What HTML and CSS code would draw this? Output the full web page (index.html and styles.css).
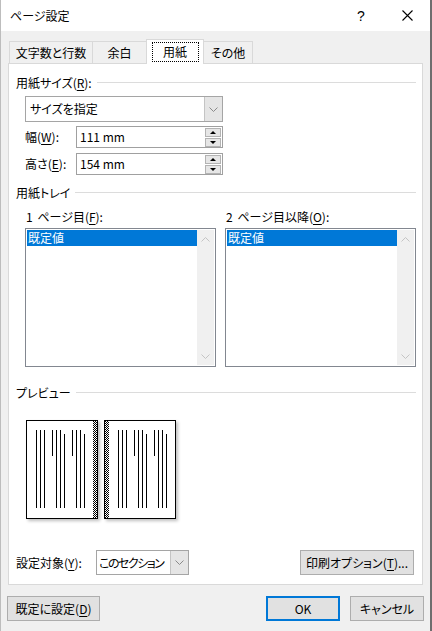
FILE: index.html
```html
<!DOCTYPE html>
<html lang="ja">
<head>
<meta charset="utf-8">
<title>ページ設定</title>
<link rel="stylesheet" href="styles.css">
</head>
<body>
<div class="window">
  <div class="titlebar">
    <span class="title">ページ設定</span>
    <span class="help">?</span>
    <span class="close"><svg width="11" height="11" viewBox="0 0 11 11"><path d="M0.5 0.5 L10.5 10.5 M10.5 0.5 L0.5 10.5" stroke="#000" stroke-width="1.1" fill="none"/></svg></span>
  </div>

  <div class="tabs">
    <div class="tab t1">文字数と行数</div>
    <div class="tab t2">余白</div>
    <div class="tab t3 active"><span class="focus">用紙</span></div>
    <div class="tab t4">その他</div>
  </div>

  <div class="panel">
    <div class="group-head g1"><span>用紙サイズ(<u>R</u>):</span><i class="rule"></i></div>

    <div class="combo size-combo">
      <span class="combo-text">サイズを指定</span>
      <span class="combo-btn"><svg width="9" height="5" viewBox="0 0 9 5"><path d="M0.5 0.5 L4.5 4.5 L8.5 0.5" stroke="#8a8a8a" fill="none"/></svg></span>
    </div>

    <div class="field-row fr1">
      <span class="field-label">幅(<u>W</u>):</span>
      <div class="spin">
        <span class="spin-text">111 mm</span>
        <span class="spin-btns"><span class="sb up"></span><span class="sb down"></span></span>
      </div>
    </div>
    <div class="field-row fr2">
      <span class="field-label">高さ(<u>E</u>):</span>
      <div class="spin">
        <span class="spin-text">154 mm</span>
        <span class="spin-btns"><span class="sb up"></span><span class="sb down"></span></span>
      </div>
    </div>

    <div class="group-head g2"><span>用紙トレイ</span><i class="rule"></i></div>

    <div class="trays">
      <div class="tray">
        <div class="tray-label">1 ページ目(<u>F</u>):</div>
        <div class="listbox">
          <div class="items"><div class="item sel">既定値</div></div>
          <div class="vscroll">
            <svg width="9" height="5" viewBox="0 0 9 5"><path d="M0.5 4.5 L4.5 0.5 L8.5 4.5" stroke="#c4c4c4" fill="none"/></svg>
            <svg width="9" height="5" viewBox="0 0 9 5"><path d="M0.5 0.5 L4.5 4.5 L8.5 0.5" stroke="#c4c4c4" fill="none"/></svg>
          </div>
        </div>
      </div>
      <div class="tray">
        <div class="tray-label">2 ページ目以降(<u>O</u>):</div>
        <div class="listbox">
          <div class="items"><div class="item sel">既定値</div></div>
          <div class="vscroll">
            <svg width="9" height="5" viewBox="0 0 9 5"><path d="M0.5 4.5 L4.5 0.5 L8.5 4.5" stroke="#c4c4c4" fill="none"/></svg>
            <svg width="9" height="5" viewBox="0 0 9 5"><path d="M0.5 0.5 L4.5 4.5 L8.5 0.5" stroke="#c4c4c4" fill="none"/></svg>
          </div>
        </div>
      </div>
    </div>

    <div class="group-head g3"><span>プレビュー</span><i class="rule"></i></div>

    <div class="preview">
      <svg class="page" width="72" height="99" viewBox="0 0 72 99">
        <defs>
          <pattern id="chk" width="2" height="2" patternUnits="userSpaceOnUse">
            <rect width="2" height="2" fill="#fff"/>
            <rect width="1" height="1" fill="#000"/>
            <rect x="1" y="1" width="1" height="1" fill="#000"/>
          </pattern>
        </defs>
        <rect x="0.5" y="0.5" width="71" height="98" fill="#fff" stroke="#000"/>
        <rect x="67" y="1" width="4" height="97" fill="url(#chk)"/>
        <g stroke="#000" stroke-width="1">
          <path d="M10.5 10 V88 M14.5 10 V88 M18.5 10 V88"/>
          <path d="M26.5 10 V36 M30.5 10 V88 M34.5 10 V88 M38.5 14 V88"/>
          <path d="M46.5 10 V36 M50.5 10 V88 M54.5 10 V88 M58.5 14 V88"/>
        </g>
      </svg>
      <svg class="page" width="72" height="99" viewBox="0 0 72 99">
        <defs>
          <pattern id="chk2" width="2" height="2" patternUnits="userSpaceOnUse">
            <rect width="2" height="2" fill="#fff"/>
            <rect width="1" height="1" fill="#000"/>
            <rect x="1" y="1" width="1" height="1" fill="#000"/>
          </pattern>
        </defs>
        <rect x="0.5" y="0.5" width="71" height="98" fill="#fff" stroke="#000"/>
        <rect x="1" y="1" width="4" height="97" fill="url(#chk2)"/>
        <g stroke="#000" stroke-width="1">
          <path d="M14.5 10 V88 M18.5 10 V88 M22.5 10 V88"/>
          <path d="M30.5 10 V36 M34.5 10 V88 M38.5 10 V88 M42.5 14 V88"/>
          <path d="M50.5 10 V36 M54.5 10 V88 M58.5 10 V88 M62.5 14 V88"/>
        </g>
      </svg>
    </div>

    <div class="apply-row">
      <span class="apply-label">設定対象(<u>Y</u>):</span>
      <div class="combo apply-combo">
        <span class="combo-text">このセクション</span>
        <span class="combo-btn"><svg width="9" height="5" viewBox="0 0 9 5"><path d="M0.5 0.5 L4.5 4.5 L8.5 0.5" stroke="#8a8a8a" fill="none"/></svg></span>
      </div>
      <button class="btn print-btn">印刷オプション(<u>T</u>)...</button>
    </div>
  </div>

  <div class="footer">
    <button class="btn default-btn">既定に設定(<u>D</u>)</button>
    <button class="btn ok-btn">OK</button>
    <button class="btn cancel-btn">キャンセル</button>
  </div>
</div>
</body>
</html>
```

FILE: styles.css
```css
* { box-sizing: border-box; }
html, body { margin: 0; padding: 0; }
body {
  width: 432px;
  height: 631px;
  overflow: hidden;
  font-family: "Noto Sans CJK JP", "Noto Sans", sans-serif;
  font-size: 12px;
  line-height: 16px;
  color: #000;
  background: #f0f0f0;
  font-feature-settings: "palt";
}
u { text-decoration: underline; text-underline-offset: 2px; }

.window {
  height: 631px;
  border-left: 1px solid #bdbdbd;
  border-right: 2px solid #6e6e6e;
  background: #f0f0f0;
  display: flex;
  flex-direction: column;
}

/* title bar */
.titlebar {
  flex: none;
  height: 31px;
  background: #fff;
  display: flex;
  align-items: center;
  padding-left: 9px;
}
.title { flex: 1; }
.help { width: 46px; text-align: center; font-family: "Liberation Sans", sans-serif; font-size: 14px; }
.close { width: 46px; display: flex; justify-content: center; align-items: center; }
.close svg { display: block; }

/* tabs */
.tabs {
  flex: none;
  margin-top: 8px;
  height: 24px;
  padding-left: 8px;
  display: flex;
  align-items: flex-end;
}
.tab {
  height: 22px;
  border: 1px solid #d9d9d9;
  border-bottom: none;
  margin-left: -1px;
  display: flex;
  align-items: center;
  justify-content: center;
  background: #f0f0f0;
  white-space: nowrap;
}
.t1 { margin-left: 0; width: 84px; }
.t2 { width: 55px; }
.t3 { width: 58px; }
.t4 { width: 50px; }
.tab.active {
  height: 25px;
  margin-bottom: -1px;
  background: #fff;
  position: relative;
  z-index: 1;
  padding-bottom: 1px;
}
.focus {
  display: flex;
  align-items: center;
  justify-content: center;
  width: 47px;
  height: 20px;
  outline: 1px dotted #000;
  outline-offset: -1px;
}

/* panel */
.panel {
  flex: none;
  margin-left: 7px;
  width: 415px;
  height: 522px;
  background: #fff;
  border: 1px solid #d9d9d9;
}
.group-head {
  display: flex;
  align-items: center;
  height: 16px;
  padding-left: 7px;
  padding-right: 6px;
  white-space: nowrap;
}
.group-head .rule {
  flex: 1;
  height: 1px;
  background: #dcdcdc;
  margin-left: 5px;
  margin-top: -1px;
}
.g1 { margin-top: 11px; }
.g2 { margin-top: 10px; }
.g3 { margin-top: 18px; }

/* combo */
.combo {
  display: flex;
  border: 1px solid #a5a5a5;
  background: #fff;
}
.combo-text {
  flex: 1;
  display: flex;
  align-items: center;
  padding-left: 4px;
  white-space: nowrap;
  overflow: hidden;
}
.combo-btn {
  width: 18px;
  flex: none;
  background: #e5e5e5;
  border-left: 1px solid #c4c4c4;
  display: flex;
  align-items: center;
  justify-content: center;
}
.combo-btn svg { display: block; }
.size-combo {
  margin: 5px 0 0 16px;
  width: 198px;
  height: 26px;
}

/* spin fields */
.field-row {
  display: flex;
  align-items: center;
  margin-left: 16px;
  height: 22px;
}
.fr1 { margin-top: 4px; }
.fr2 { margin-top: 5px; }
.field-label { width: 51px; }
.spin {
  width: 147px;
  height: 22px;
  border: 1px solid #a0a0a0;
  display: flex;
  align-items: center;
}
.spin-text { flex: 1; padding-left: 3px; }
.spin-btns {
  display: flex;
  flex-direction: column;
  gap: 1px;
  margin-right: 1px;
}
.sb {
  width: 16px;
  height: 9px;
  background: #e6e6e6;
  border: 1px solid #b3b3b3;
  display: flex;
  align-items: center;
  justify-content: center;
}
.sb::after {
  content: "";
  width: 0;
  height: 0;
  border-left: 3px solid transparent;
  border-right: 3px solid transparent;
}
.sb.up::after { border-bottom: 3px solid #000; }
.sb.down::after { border-top: 3px solid #000; }

/* trays */
.trays {
  margin-top: 8px;
  padding-left: 16px;
  display: grid;
  grid-template-columns: 191px 191px;
  column-gap: 9px;
}
.tray-label { padding-left: 1px; height: 16px; white-space: nowrap; word-spacing: 2px; }
.listbox {
  margin-top: 3px;
  height: 139px;
  border: 1px solid #828790;
  padding: 1px;
  display: flex;
  background: #fff;
}
.items { flex: 1; }
.item { height: 16px; line-height: 16px; padding-left: 1px; }
.item.sel { background: #0078d7; color: #fff; }
.vscroll {
  width: 17px;
  background: #f0f0f0;
  display: flex;
  flex-direction: column;
  justify-content: space-between;
  align-items: center;
  padding: 7px 0 6px;
}
.vscroll svg { display: block; }

/* preview */
.preview {
  margin-top: 19px;
  padding-left: 17px;
  display: flex;
  gap: 6px;
}
.page {
  display: block;
  box-shadow: 2px 2px 3px rgba(0, 0, 0, 0.25);
}

/* apply row */
.apply-row {
  margin-top: 31px;
  display: flex;
  align-items: center;
  padding-left: 7px;
  padding-right: 8px;
}
.apply-label { width: 80px; white-space: nowrap; }
.apply-combo { width: 93px; height: 25px; }
.apply-combo .combo-text { padding-left: 2px; letter-spacing: -1.5px; }
.btn {
  font-family: inherit;
  font-size: 12px;
  line-height: 16px;
  color: #000;
  background: #e1e1e1;
  border: 1px solid #adadad;
  padding: 0;
  margin: 0;
  white-space: nowrap;
  font-feature-settings: "palt";
}
.print-btn { margin-left: auto; width: 114px; height: 25px; }

/* footer */
.footer {
  margin-top: 11px;
  display: flex;
  padding-left: 6px;
  padding-right: 6px;
}
.footer .btn { height: 25px; }
.default-btn { width: 93px; }
.ok-btn { margin-left: auto; width: 74px; border: 2px solid #0078d7; }
.cancel-btn { margin-left: 10px; width: 74px; }
```
